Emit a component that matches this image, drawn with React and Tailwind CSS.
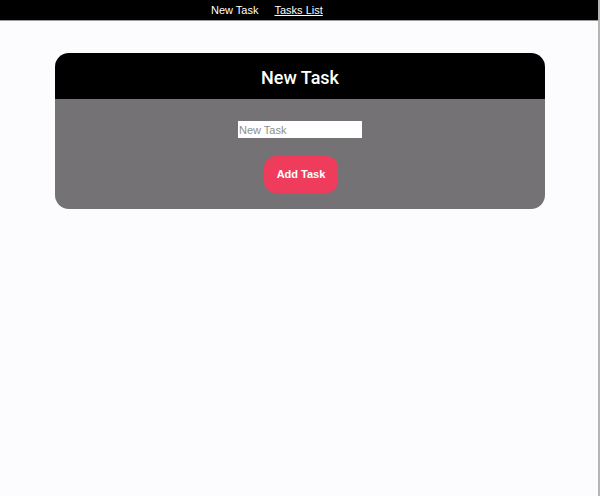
import { useState } from 'react'

export default function App() {
  const [task, setTask] = useState('')

  return (
    <div className="min-h-[496px] bg-[#fcfbfd] border-r-2 border-[#b5b4b6] font-['Helvetica','Liberation_Sans','Arial',sans-serif]">
      {/* Nav */}
      <nav className="h-[21px] bg-black border-b border-[#9a9a9a] flex items-center gap-4 pl-[211px] text-[11px] text-white">
        <a className="cursor-pointer">New Task</a>
        <a className="cursor-pointer underline">Tasks List</a>
      </nav>

      {/* Card */}
      <div className="ml-[55px] mr-[53px] mt-[32px] rounded-[14px] overflow-hidden">
        <div className="h-[46px] bg-black flex items-center justify-center pt-[3px]">
          <h1 className="text-white text-[18px] font-medium font-['Roboto','Liberation_Sans',sans-serif]">New Task</h1>
        </div>
        <div className="bg-[#747275] h-[110px] flex flex-col items-center pt-[22px]">
          <input
            value={task}
            onChange={e => setTask(e.target.value)}
            placeholder="New Task"
            className="w-[124px] h-[17px] bg-white text-[11px] px-[1px] outline-none placeholder:text-[#8e8e8e]"
          />
          <button className="mt-[18px] w-[74px] h-[37px] rounded-[12px] bg-[#f03c5c] text-white text-[11px] font-bold ml-[2px]">
            Add Task
          </button>
        </div>
      </div>
    </div>
  )
}
